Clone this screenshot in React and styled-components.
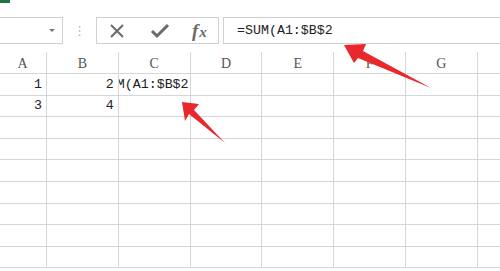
// IMPORTS
import React from 'react';
import styled, { createGlobalStyle } from 'styled-components';

// DATA
const columns = ['A', 'B', 'C', 'D', 'E', 'F', 'G', ''];
const rows = [
    ['1', '2', '=SUM(A1:$B$2'],
    ['3', '4'],
    [], [], [], [], [], [], []
];

// COMPONENT
const App = () => {
    return (
        <Page>
            <GlobalStyle />
            <GreenBar />
            <Toolbar>
                <NameBox>
                    <DropArrow />
                </NameBox>
                <Dots>⋮</Dots>
                <FxGroup>
                    <IconSlot>
                        <svg width="18" height="18" viewBox="0 0 18 18">
                            <path d="M3 3 L15 15 M15 3 L3 15" stroke="#6a6a6a" strokeWidth="2" fill="none" />
                        </svg>
                    </IconSlot>
                    <IconSlot>
                        <svg width="20" height="18" viewBox="0 0 20 18">
                            <path d="M2 9 L7 14 L18 3" stroke="#6a6a6a" strokeWidth="3" fill="none" strokeLinejoin="miter" />
                        </svg>
                    </IconSlot>
                    <FxLabel>
                        <i>f</i><i>x</i>
                    </FxLabel>
                </FxGroup>
                <FormulaBox>=SUM(A1:$B$2</FormulaBox>
            </Toolbar>

            <Grid>
                {columns.map((col, i) => (
                    <HeadCell key={'h' + i}>{col}</HeadCell>
                ))}
                {rows.map((row, r) =>
                    columns.map((col, c) => (
                        <Cell key={r + '-' + c} $editing={r === 0 && c === 2}>
                            <span>{row[c] || ''}</span>
                        </Cell>
                    ))
                )}
            </Grid>

            <Arrows width="500" height="271" viewBox="0 0 500 271">
                <polygon points="344,45 366,44 363,51 431,88 358,58 354,63" fill="#e8282b" />
                <polygon points="182,102 199,104 194,110 225,143 189,114 185,121" fill="#e8282b" />
            </Arrows>
        </Page>
    );
};

// STYLED COMPONENTS
const GlobalStyle = createGlobalStyle`
    html, body {
        margin: 0;
        padding: 0;
        background: #fff;
        overflow: hidden;
    }
`

const Page = styled.div`
    position: relative;
    width: 500px;
    height: 271px;
    overflow: hidden;
    background: #fff;
    font-family: "Liberation Serif", serif;
`

const GreenBar = styled.div`
    width: 10px;
    height: 3px;
    background-color: #217346;
`

const Toolbar = styled.div`
    display: flex;
    align-items: center;
    height: 27px;
    margin-top: 14px;
`

const NameBox = styled.div`
    box-sizing: border-box;
    width: 64px;
    height: 27px;
    margin-left: -1px;
    border: 1px solid #d0d0d0;
    display: flex;
    align-items: center;
    justify-content: flex-end;
    padding-right: 7px;
`

const DropArrow = styled.div`
    width: 0;
    height: 0;
    border-left: 3px solid transparent;
    border-right: 3px solid transparent;
    border-top: 3px solid #777;
`

const Dots = styled.div`
    width: 33px;
    text-align: center;
    color: #b0b0b0;
    font-family: "DejaVu Sans", sans-serif;
    font-size: 13px;
`

const FxGroup = styled.div`
    box-sizing: border-box;
    width: 123px;
    height: 27px;
    border: 1px solid #d0d0d0;
    display: flex;
    align-items: center;
    padding-left: 11px;
    gap: 0;
`

const IconSlot = styled.div`
    width: 40px;
    display: flex;
    align-items: center;
    justify-content: flex-start;
    &:nth-child(2) { padding-left: 2px; }
`

const FxLabel = styled.div`
    margin-left: 0;
    padding-left: 2px;
    color: #6a6a6a;
    font-family: "Liberation Serif", serif;
    font-size: 19px;
    font-weight: bold;
    i:first-child { margin-right: 1px; }
    i:last-child { font-size: 15px; }
`

const FormulaBox = styled.div`
    box-sizing: border-box;
    margin-left: 4px;
    flex: 1;
    height: 27px;
    border: 1px solid #d0d0d0;
    border-right: none;
    padding-left: 13px;
    display: flex;
    align-items: center;
    font-family: "Liberation Mono", monospace;
    font-size: 13.3px;
    color: #222;
`

const Grid = styled.div`
    margin-top: 8px;
    margin-left: -1px;
    display: grid;
    grid-template-columns: 48px repeat(7, 71.8px);
    grid-template-rows: 22px;
    grid-auto-rows: 21.6px;
`

const HeadCell = styled.div`
    box-sizing: border-box;
    border-right: 1px solid #d6d6d6;
    border-bottom: 1px solid #d6d6d6;
    display: flex;
    align-items: center;
    justify-content: center;
    padding-top: 2px;
    font-family: "Liberation Serif", serif;
    font-size: 14px;
    color: #555;
`

const Cell = styled.div`
    box-sizing: border-box;
    border-right: 1px solid #d6d6d6;
    border-bottom: 1px solid #d6d6d6;
    display: flex;
    align-items: center;
    justify-content: flex-end;
    padding-right: ${p => (p.$editing ? '1px' : '4px')};
    overflow: hidden;
    white-space: nowrap;
    font-family: "Liberation Mono", monospace;
    font-size: 13.3px;
    color: #222;
    span { flex-shrink: 0; }
`

const Arrows = styled.svg`
    position: absolute;
    left: 0;
    top: 0;
    pointer-events: none;
`

// EXPORT
export default App;
